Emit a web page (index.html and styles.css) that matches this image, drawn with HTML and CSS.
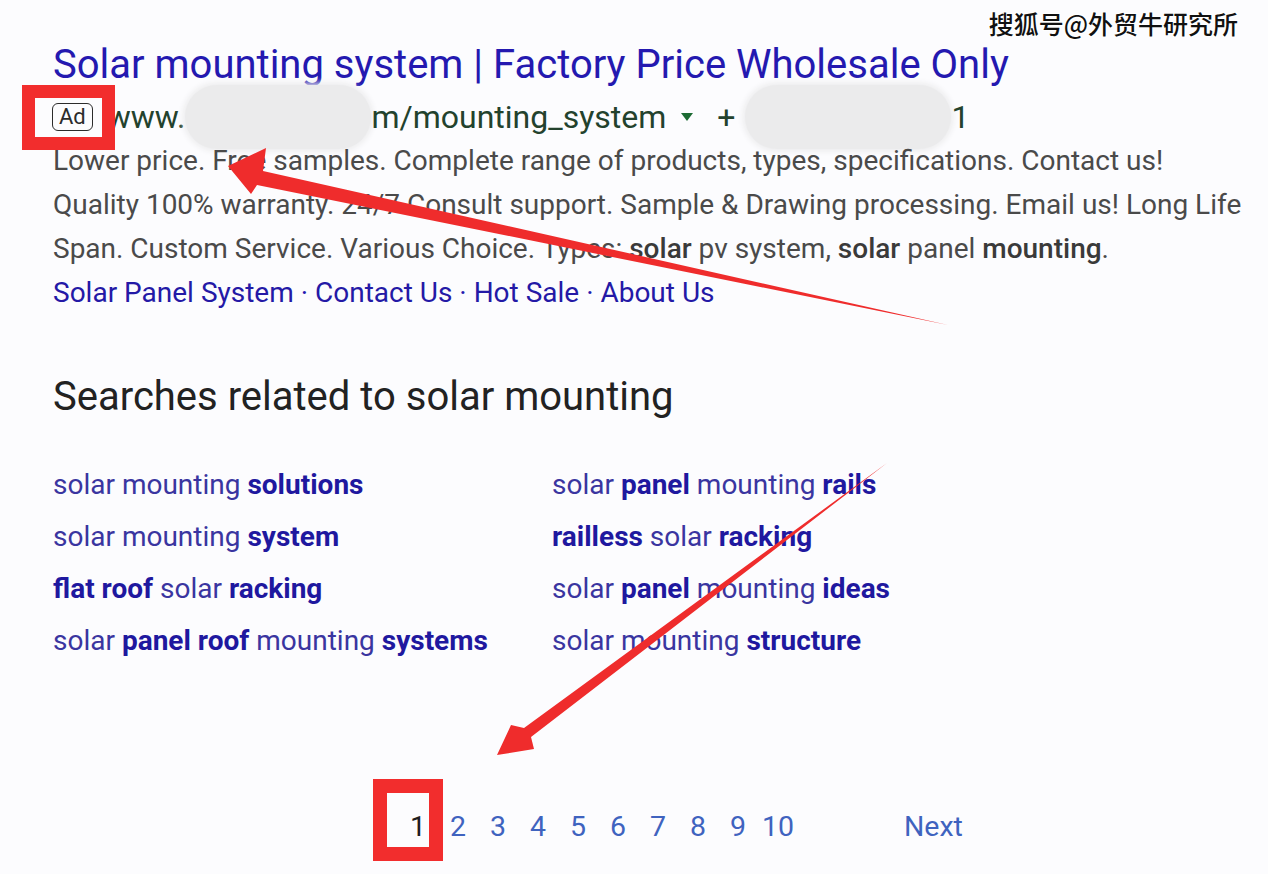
FILE: index.html
```html
<!DOCTYPE html>
<html lang="en">
<head>
    <meta charset="UTF-8">
    <meta name="viewport" content="width=device-width, initial-scale=1.0">
    <title>Searches related to solar mounting</title>
    <link rel="stylesheet" href="styles.css">
</head>
<body>
    <div class="page">
        <div class="ad">
            <a class="ad-title" href="#">Solar mounting system | Factory Price Wholesale Only</a>
            <div class="ad-url">
                <span class="badge">Ad</span>
                <span class="url-text">www.</span><span class="blur blur-domain"></span><span class="url-text">m/mounting_system</span>
                <span class="caret"></span>
                <span class="url-text phone">+</span><span class="blur blur-phone"></span><span class="url-text">1</span>
            </div>
            <p class="ad-desc">
                Lower price. Free samples. Complete range of products, types, specifications. Contact us!<br>
                Quality 100% warranty. 24/7 Consult support. Sample &amp; Drawing processing. Email us! Long Life<br>
                Span. Custom Service. Various Choice. Types: <b>solar</b> pv system, <b>solar</b> panel <b>mounting</b>.
            </p>
            <div class="sitelinks">
                <a href="#">Solar Panel System</a> · <a href="#">Contact Us</a> · <a href="#">Hot Sale</a> · <a href="#">About Us</a>
            </div>
        </div>

        <div class="related">
            <h2 class="related-title">Searches related to solar mounting</h2>
            <div class="related-grid">
                <a href="#">solar mounting <b>solutions</b></a>
                <a href="#">solar <b>panel</b> mounting <b>rails</b></a>
                <a href="#">solar mounting <b>system</b></a>
                <a href="#"><b>railless</b> solar <b>racking</b></a>
                <a href="#"><b>flat roof</b> solar <b>racking</b></a>
                <a href="#">solar <b>panel</b> mounting <b>ideas</b></a>
                <a href="#">solar <b>panel roof</b> mounting <b>systems</b></a>
                <a href="#">solar mounting <b>structure</b></a>
            </div>
        </div>

        <nav class="pager">
            <span class="page-num current">1</span>
            <a class="page-num" href="#">2</a>
            <a class="page-num" href="#">3</a>
            <a class="page-num" href="#">4</a>
            <a class="page-num" href="#">5</a>
            <a class="page-num" href="#">6</a>
            <a class="page-num" href="#">7</a>
            <a class="page-num" href="#">8</a>
            <a class="page-num" href="#">9</a>
            <a class="page-num" href="#">10</a>
            <a class="page-next" href="#">Next</a>
        </nav>
    </div>

    <div class="watermark">搜狐号@外贸牛研究所</div>

    <!-- annotations -->
    <div class="mark mark-ad"></div>
    <div class="mark mark-page"></div>
    <svg class="arrows" width="1268" height="874" viewBox="0 0 1268 874">
        <polygon fill="#ef2c2c" points="228,166 266,148 263,171 948,325 257,185 251,194"/>
        <polygon fill="#ef2c2c" points="497,755 511,725 524,728 887,463 531,737 534,749"/>
    </svg>
</body>
</html>
```

FILE: styles.css
```css
body {
    margin: 0;
    background-color: #fcfcfe;
    font-family: Roboto, "Noto Sans", sans-serif;
    color: #4a4a4a;
    width: 1268px;
    height: 874px;
    overflow: hidden;
    position: relative;
}

a {
    text-decoration: none;
}

.page {
    padding: 40px 0 0 53px;
}

/* ad block */
.ad-title {
    display: block;
    font-size: 40px;
    line-height: 50px;
    color: #2419b0;
    white-space: nowrap;
}

.ad-url {
    display: flex;
    align-items: center;
    height: 44px;
    margin-top: 5px;
    font-size: 32px;
    color: #23422d;
    white-space: nowrap;
}

.badge {
    font-size: 22px;
    line-height: 26px;
    padding: 0 6px;
    border: 1.5px solid #2b2b2b;
    border-radius: 6px;
    color: #2b2b2b;
    margin: 0 14px 0 -1px;
}

.blur {
    display: inline-block;
    height: 64px;
    margin: -10px 0;
    border-radius: 32px;
    background-color: #ebebec;
    box-shadow: 0 0 6px 2px #ebebec;
}

.blur-domain {
    width: 186px;
}

.blur-phone {
    width: 206px;
}

.caret {
    width: 0;
    height: 0;
    border-left: 6px solid transparent;
    border-right: 6px solid transparent;
    border-top: 8px solid #1c6b33;
    margin: 0 24px 0 15px;
}

.phone {
    margin-right: 10px;
}

.ad-desc {
    margin: 0;
    font-size: 28px;
    line-height: 44px;
}

.ad-desc b {
    font-weight: 500;
    color: #3a3a3a;
}

.sitelinks {
    font-size: 28px;
    line-height: 44px;
    color: #2419b0;
}

.sitelinks a {
    color: #2419a6;
}

/* related searches */
.related {
    margin-top: 57px;
}

.related-title {
    margin: 0;
    font-size: 40px;
    font-weight: 400;
    line-height: 50px;
    color: #222;
}

.related-grid {
    display: grid;
    grid-template-columns: 499px 499px;
    grid-auto-rows: 52px;
    margin-top: 37px;
    font-size: 28px;
}

.related-grid a {
    color: #3a35a0;
    line-height: 52px;
}

.related-grid b {
    font-weight: 700;
    color: #1f189f;
}

/* pagination */
.pager {
    display: flex;
    align-items: center;
    margin-top: 140px;
    padding-left: 345px;
    font-size: 28.5px;
    line-height: 40px;
}

.page-num {
    width: 40px;
    text-align: center;
    color: #3f63bf;
}

.page-num.current {
    color: #1d1d1d;
}

.page-next {
    margin-left: 106px;
    color: #3f63bf;
}

/* overlays */
.watermark {
    position: absolute;
    top: 5px;
    right: 30px;
    font-family: "Noto Sans CJK SC", sans-serif;
    font-size: 25px;
    font-weight: 500;
    color: #111;
    text-shadow: -1px -1px 0 #fff, 1px -1px 0 #fff, -1px 1px 0 #fff, 1px 1px 0 #fff;
}

.mark {
    position: absolute;
    border: 13px solid #f22d2d;
}

.mark-ad {
    left: 22px;
    top: 85px;
    width: 67px;
    height: 39px;
}

.mark-page {
    left: 373px;
    top: 779px;
    width: 42px;
    height: 54px;
    border-width: 14px;
}

.arrows {
    position: absolute;
    left: 0;
    top: 0;
    pointer-events: none;
}
```
